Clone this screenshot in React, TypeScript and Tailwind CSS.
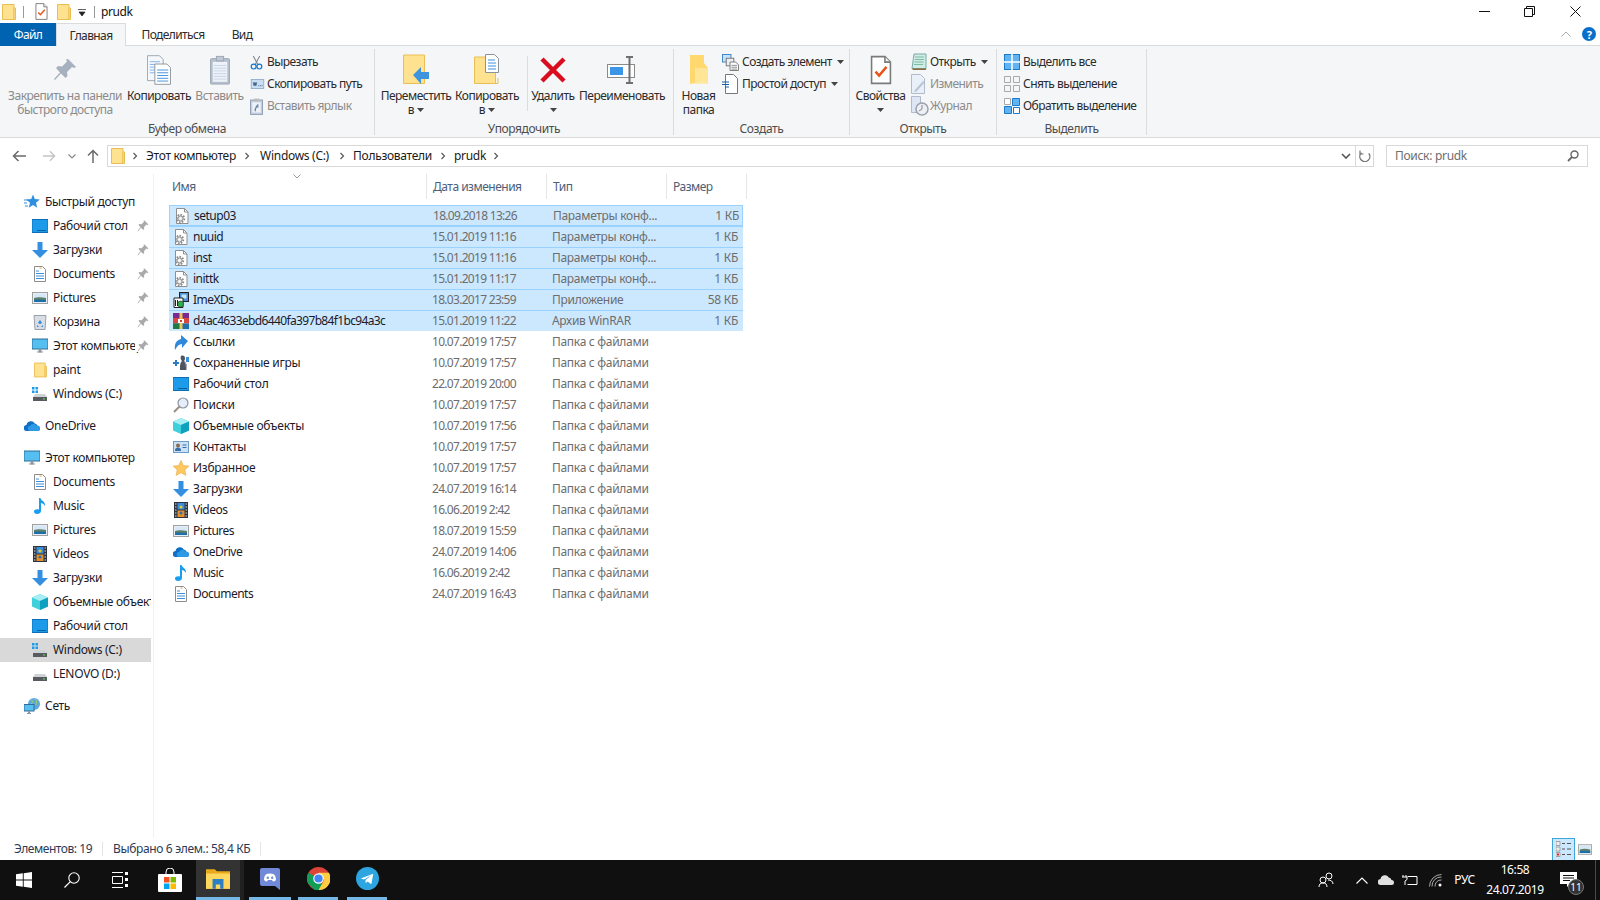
import React from 'react';

type P = { className?: string };
const Svg = ({ s = 16, h, children, vb, className }: { s?: number; h?: number; vb?: string; children: React.ReactNode; className?: string }) => (
  <svg width={s} height={h ?? s} viewBox={vb ?? `0 0 ${s} ${h ?? s}`} className={`shrink-0 ${className ?? ''}`}>{children}</svg>
);

const Folder = ({ s = 16, h = 16 }: { s?: number; h?: number }) => (
  <Svg s={s} h={h} vb="0 0 14 16">
    <path d="M.5.5h11.500v15H.5z" fill="#FFE28F" stroke="#E9BE55" />
    <path d="M12 4v11.500h1.500V4z" fill="#FFE9A8" stroke="#E9BE55" />
  </Svg>
);
const CheckDoc = ({ s = 16, h = 16 }: { s?: number; h?: number }) => (
  <Svg s={s} h={h} vb="0 0 14 18">
    <path d="M1 .5h8.500l3.500 3.500v13.500H1z" fill="#fff" stroke="#7a7a7a" />
    <path d="M9.500.5V4H13" fill="#eee" stroke="#7a7a7a" />
    <path d="M3.500 10l2.300 2.500L10.500 7" fill="none" stroke="#E8541C" strokeWidth="1.600" />
  </Svg>
);
const Pin = ({ c = '#A7B0BE' }: { c?: string }) => (
  <Svg s={24} vb="0 0 24 24">
    <path d="M15 1l8 8-2 1-2-1-5 5 .5 4-2 2-4.500-4.500L2 22l-1-1 6-6.500L3 10l2-2 4 .5 5-5-1-2z" fill={c} />
  </Svg>
);
const SmallPin = () => (
  <Svg s={12} vb="0 0 24 24">
    <path d="M15 1l8 8-2 1-2-1-5 5 .5 4-2 2-4.500-4.500L2 23l-1-1 6-7.500L3 10l2-2 4 .5 5-5-1-2z" fill="#A9A9A9" />
  </Svg>
);
const CopyDocs = () => (
  <Svg s={24} h={30} vb="0 0 26 32">
    <path d="M.5.5h13l4 4v23H.5z" fill="#F4F7FB" stroke="#9aa3ad" />
    <path d="M3 7h11M3 10h11M3 13h11M3 16h11M3 19h11" stroke="#7fb2e6" />
    <path d="M8.500 9.500h13l4 4v18h-17z" fill="#fff" stroke="#8a939c" />
    <path d="M11 16h12M11 19h12M11 22h12M11 25h12M11 28h12" stroke="#3e8ddd" />
  </Svg>
);
const Clipboard = () => (
  <Svg s={20} h={30} vb="0 0 22 32">
    <rect x=".5" y="3.500" width="21" height="28" rx="1" fill="#B5BFCD" stroke="#9aa5b4" />
    <rect x="3" y="7" width="16" height="22" fill="#EEF2F8" />
    <path d="M4 11h14M4 14h14M4 17h14M4 20h14M4 23h14M4 26h14" stroke="#C6D3E6" />
    <rect x="7" y="1" width="8" height="5" fill="#C0C8D3" stroke="#9aa5b4" />
  </Svg>
);
const Scissors = () => (
  <Svg vb="0 0 16 18" s={13} h={17}>
    <path d="M4 1l6 11M12 1L6 12" stroke="#7E8792" strokeWidth="1.300" />
    <circle cx="4.500" cy="14" r="3" fill="none" stroke="#1877CC" strokeWidth="1.500" />
    <circle cx="11.500" cy="14" r="3" fill="none" stroke="#1877CC" strokeWidth="1.500" />
  </Svg>
);
const CopyPath = () => (
  <Svg s={15} h={10} vb="0 0 16 12">
    <rect x=".5" y=".5" width="15" height="11" fill="#C9DEF3" stroke="#8DA9C7" />
    <path d="M3 4l1 4 1-4 1 4 1-4M9 8h1M11 8h1M13 8h1" stroke="#1c3d66" fill="none" strokeWidth=".9" />
  </Svg>
);
const Shortcut = () => (
  <Svg s={13} h={17} vb="0 0 14 18">
    <rect x=".5" y="2" width="13" height="15.500" fill="#C3CFE0" stroke="#8e9db3" />
    <rect x="2.500" y="4.500" width="9" height="11" fill="#EEF2F8" />
    <rect x="4" y=".5" width="6" height="3" fill="#bbb" />
    <path d="M5 14v-3l2-2H5.500L9 6v5L8 9.800 6.500 11.500V14z" fill="#6C87A8" />
  </Svg>
);
const MoveTo = () => (
  <Svg s={26} h={32} vb="0 0 26 32">
    <path d="M.5 1h21v28.500H.5z" fill="#FFE28F" stroke="#E9BE55" />
    <path d="M10 21l8-8v5h8v7h-8v5z" fill="#3F94DE" />
  </Svg>
);
const CopyTo = () => (
  <Svg s={26} h={32} vb="0 0 26 32">
    <path d="M.5 3h21v26.500H.5z" fill="#FFE28F" stroke="#E9BE55" />
    <path d="M21 29.500H24V24" fill="none" stroke="#E9BE55" />
    <path d="M11.500.5h9l4 4v14h-13z" fill="#fff" stroke="#8a939c" />
    <path d="M14 6h7M14 9h8M14 12h8M14 15h8" stroke="#3e8ddd" />
  </Svg>
);
const BigX = () => (
  <Svg s={28} vb="0 0 28 28">
    <path d="M3 3l22 22M25 3L3 25" stroke="#D90D1E" strokeWidth="4.500" />
  </Svg>
);
const Rename = () => (
  <Svg s={30} h={32} vb="0 0 30 32">
    <rect x=".5" y="10.500" width="27" height="13" fill="#fff" stroke="#8b8b8b" />
    <rect x="3" y="13" width="13" height="8" fill="#3B96E8" />
    <path d="M19 3h3.500V29H19M26 3h-3.500M26 29h-3.500" fill="none" stroke="#6f6f6f" strokeWidth="2" />
  </Svg>
);
const NewFolder = () => (
  <Svg s={20} h={32} vb="0 0 20 32">
    <path d="M1 1h14v8l4 5v16l-5-3v1L1 30z" fill="#FFD970" />
    <path d="M6 14h13v16H6z" fill="#FFE7A0" opacity=".8" />
  </Svg>
);
const NewItem = () => (
  <Svg s={17} vb="0 0 18 18">
    <rect x=".5" y=".5" width="9" height="8" fill="#C6E1F8" stroke="#3A86C8" />
    <rect x="4.500" y="4.500" width="8" height="8" fill="#eee" stroke="#777" />
    <path d="M8.500 8.500h6l3 3v6h-9z" fill="#fff" stroke="#777" />
    <path d="M10 12h6M10 14h6M10 16h6" stroke="#888" />
  </Svg>
);
const EasyAccess = () => (
  <Svg s={16} h={20} vb="0 0 16 20">
    <path d="M3.500.5h8l4 4v15h-12z" fill="#fff" stroke="#777" />
    <path d="M0 8h7M0 10.500h7M3 13h4" stroke="#1C5FA8" strokeWidth="1.200" />
  </Svg>
);
const OpenIco = () => (
  <Svg s={16} h={18} vb="0 0 16 18">
    <path d="M3 1h12v14.500H1z" fill="#CFEDE3" stroke="#7aa" />
    <path d="M4 4h9M4 6.500h9M3.500 9h9M3 11.500h9" stroke="#7fb9a8" />
    <path d="M1 15.500h14V17H2z" fill="#8a6b3a" />
  </Svg>
);
const EditIco = () => (
  <Svg s={14} h={20} vb="0 0 14 20">
    <path d="M.5.5h9l4 4v15H.5z" fill="#EAF0F8" stroke="#B0BCCC" />
    <path d="M4 16l8-9 1.500 1.500L5.500 17.500 3 18z" fill="#B7C4D6" />
  </Svg>
);
const HistoryIco = () => (
  <Svg s={18} h={20} vb="0 0 18 20">
    <path d="M.5.5h9v16H.5z" fill="#DDE6F2" stroke="#B0BCCC" />
    <circle cx="11" cy="13" r="6" fill="#EDEFF2" stroke="#98A2AE" strokeWidth="1.500" />
    <path d="M11 9v4l-3 2" stroke="#7d8794" fill="none" />
  </Svg>
);
const SelectAll = () => (
  <Svg s={16} vb="0 0 16 16">
    <rect x=".5" y=".5" width="15" height="15" fill="#61B3F3" stroke="#1A7BCB" />
    <path d="M8 0v16M0 8h16" stroke="#fff" strokeWidth="1.500" />
  </Svg>
);
const SelectNone = () => (
  <Svg s={16} vb="0 0 16 16">
    <path d="M.5.5h6v6h-6zM9.500.5h6v6h-6zM.5 9.500h6v6h-6zM9.500 9.500h6v6h-6z" fill="none" stroke="#A9A9A9" />
  </Svg>
);
const Invert = () => (
  <Svg s={16} vb="0 0 16 16">
    <path d="M.5.500h6v6h-6z" fill="#fff" stroke="#A9A9A9" />
    <path d="M8.500.5h7v7h-7zM.5 8.500h7v7h-7z" fill="#61B3F3" stroke="#1A7BCB" />
    <path d="M9.500 9.500h6v6h-6z" fill="#fff" stroke="#1A7BCB" />
  </Svg>
);
const Tri = () => (
  <svg width="7" height="4" viewBox="0 0 7 4" className="shrink-0"><path d="M0 0h7L3.500 4z" fill="#444" /></svg>
);

const FileGear = () => (
  <Svg s={16} vb="0 0 16 16">
    <path d="M2.500.5h8l3.500 3.500v11.500H2.500z" fill="#fff" stroke="#8f8f8f" />
    <path d="M10.500.5V4H14" fill="none" stroke="#8f8f8f" />
    <circle cx="6.500" cy="10.500" r="3.800" fill="none" stroke="#8a8a8a" strokeWidth="1.800" strokeDasharray="1.600 1.300" />
    <circle cx="6.500" cy="10.500" r="2.600" fill="#e6e6e6" stroke="#7d7d7d" strokeWidth=".9" />
    <circle cx="6.500" cy="10.500" r="1" fill="#fff" />
  </Svg>
);
const AppIco = () => (
  <Svg s={16} vb="0 0 16 16">
    <rect x="6.500" y=".5" width="9" height="9" fill="#4B8FDB" stroke="#222" />
    <rect x="8.500" y="2.500" width="5" height="4" fill="#C4E4F8" />
    <path d="M1 6h9v9.500H1z" fill="#fff" stroke="#222" />
    <circle cx="7.500" cy="12" r="3" fill="#2DB24B" stroke="#222" strokeWidth=".6" />
    <path d="M2.500 8v6M4.500 8v6" stroke="#222" />
  </Svg>
);
const Rar = () => (
  <Svg s={16} vb="0 0 16 16">
    <rect width="16" height="5" y="0" fill="#7B2B8E" />
    <rect width="16" height="5.500" y="5" fill="#D9463E" />
    <rect width="16" height="5.500" y="10.500" fill="#1F6FA8" />
    <rect width="8" height="5.500" y="10.500" fill="#1F7A3F" />
    <rect x="6.500" width="3" height="16" fill="#E9C65B" />
    <rect x="5" y="6" width="6" height="4" fill="#fff" />
    <rect x="7" y="7" width="2" height="2" fill="#C24A2A" />
  </Svg>
);
const Links = () => (
  <Svg s={16} vb="0 0 16 16">
    <path d="M2 16C1 9 4 6 8 5V1l7 6-6 7v-4c-3 0-5 2-7 6z" fill="#2E88DC" />
  </Svg>
);
const Games = () => (
  <Svg s={16} vb="0 0 16 16">
    <path d="M0 7h2V5h2v2h2v2H4v2H2V9H0z" fill="#2E79C4" />
    <path d="M8 1c2-1 4 0 4 2 0 1 0 2-1 3 2 1 3 3 3 9H7c0-5 0-7 2-9-1-1-2-3-1-5z" fill="#4F5560" />
    <path d="M10 6c2 1 3 3 3 9h1c0-6-1-8-4-9z" fill="#B4BBC5" />
    <path d="M13 2h3v5h-3z" fill="#3A8FDB" />
  </Svg>
);
const Desktop = () => (
  <Svg s={16} h={16} vb="0 0 16 16">
    <rect y="1.500" width="16" height="13" fill="#1B9BEA" stroke="#0D6EB5" />
    <path d="M5 12.500h9" stroke="#0E5F99" />
  </Svg>
);
const Mag = () => (
  <Svg s={16} vb="0 0 16 16">
    <circle cx="10" cy="6" r="5" fill="#E5EEF8" stroke="#8a96a3" strokeWidth="1.200" />
    <path d="M6.500 9.500L1 15" stroke="#9a8f84" strokeWidth="2" />
  </Svg>
);
const Obj3d = () => (
  <Svg s={16} vb="0 0 16 16">
    <path d="M8 0l8 3.500v9L8 16l-8-3.500v-9z" fill="#3FD0DC" />
    <path d="M8 0l8 3.500L8 7 0 3.500z" fill="#A6EEF2" />
    <path d="M8 7l8-3.500v9L8 16z" fill="#0F9FBF" />
  </Svg>
);
const Contacts = () => (
  <Svg s={16} h={14} vb="0 0 16 14">
    <rect x=".5" y="1.500" width="15" height="11" fill="#C9E2F8" stroke="#6C9BC8" />
    <circle cx="5" cy="5.500" r="2" fill="#8D6A4F" />
    <path d="M2 11c0-3 1-3.500 3-3.500S8 8 8 11z" fill="#3B6EA5" />
    <path d="M9.500 5h4M9.500 7.500h4" stroke="#3B6EA5" />
  </Svg>
);
const Star = () => (
  <Svg s={16} vb="0 0 16 16">
    <path d="M8 .5l2.300 5 5.500.6-4 3.800 1.100 5.500L8 12.700l-4.900 2.700 1.100-5.500-4-3.800 5.500-.6z" fill="#FCC85F" stroke="#E8A94C" strokeWidth=".6" />
  </Svg>
);
const Down = () => (
  <Svg s={16} vb="0 0 16 16">
    <path d="M5.500 0h5v8H16l-8 8-8-8h5.500z" fill="#358FE0" />
  </Svg>
);
const Videos = () => (
  <Svg s={14} h={16} vb="0 0 14 16">
    <rect width="14" height="16" fill="#2D3440" />
    <path d="M1 2h1.500M1 5h1.500M1 8h1.500M1 11h1.500M1 14h1.500M11.500 2H13M11.500 5H13M11.500 8H13M11.500 11H13M11.500 14H13" stroke="#ddd" />
    <rect x="3.500" y="1" width="7" height="6.500" fill="#3A8DDB" />
    <rect x="3.500" y="8.500" width="7" height="6.500" fill="#E58F2B" />
    <circle cx="7" cy="5" r="1.500" fill="#E9C930" />
    <circle cx="7" cy="11" r="1.500" fill="#2C6FB5" />
  </Svg>
);
const Pictures = ({ w = 16, h = 12 }: { w?: number; h?: number }) => (
  <Svg s={w} h={h} vb="0 0 16 12">
    <rect x=".5" y=".5" width="15" height="11" fill="#E6EFF8" stroke="#A0A0A0" />
    <rect x="2" y="2" width="12" height="4" fill="#D6E8F5" />
    <path d="M2 6c3-1 8-1 12 0v4H2z" fill="#5E7E68" />
    <path d="M2 8c4-1 8 0 12 0v2H2z" fill="#1C6FA8" />
  </Svg>
);
const OneDrive = ({ s = 16 }: { s?: number }) => (
  <Svg s={s} h={s * 0.625} vb="0 0 16 10">
    <path d="M3 10a3 3 0 01-.5-6 4.500 4.500 0 018.300-1.500A3.500 3.500 0 0113.500 5 2.500 2.500 0 0113.500 10z" fill="#0F6FC6" />
    <path d="M6 10a2.500 2.500 0 01.2-5 3.500 3.500 0 016.300-.3 2.700 2.700 0 011.500 5.300z" fill="#2C9AE5" />
  </Svg>
);
const Music = () => (
  <Svg s={12} h={16} vb="0 0 12 16">
    <path d="M5 0h1.500c.5 3 5 3 4.500 8-1-2-3-3-4-3v8c0 2-2 3-4 3s-3-1-3-2.500S2 11 5 11.500z" fill="#1A9CF0" />
  </Svg>
);
const Docs = () => (
  <Svg s={12} h={16} vb="0 0 12 16">
    <path d="M.5.5h8l3 3v12H.5z" fill="#fff" stroke="#8d8d8d" />
    <path d="M2 5h3M2 7.500h8M2 10h8M2 12.500h8" stroke="#3A8DDB" />
    <path d="M5.500 2h2" stroke="#E0A030" />
  </Svg>
);
const Bin = () => (
  <Svg s={14} h={16} vb="0 0 14 16">
    <path d="M1 1.500h12L12 15.500H2z" fill="#D9DEE5" stroke="#99A1AC" />
    <path d="M5 9l2-3 2 3-2 1zM4 11l2 2H4zM10 11l-2 2h2z" fill="#2E88DC" />
  </Svg>
);
const Computer = ({ s = 16 }: { s?: number }) => (
  <Svg s={s} vb="0 0 16 16">
    <rect y="1" width="16" height="10" fill="#55BFF2" stroke="#2F6E99" />
    <path d="M5 14h6M7 11h2v3H7z" fill="#8d98a3" stroke="#8d98a3" />
  </Svg>
);
const Drive = ({ win = true }: { win?: boolean }) => (
  <Svg s={16} vb="0 0 16 16">
    {win && <path d="M0 1h2.500v2.500H0zM3.500 1H6v2.500H3.500zM0 4.500h2.500V7H0zM3.500 4.500H6V7H3.500z" fill="#1B9BEA" />}
    <path d="M3 8h10l2 3H1z" fill="#D0D3D6" />
    <rect x="1" y="11" width="14" height="4" fill="#585C60" />
    <rect x="11" y="12.500" width="2" height="1" fill="#4CE14C" />
  </Svg>
);
const Network = () => (
  <Svg s={16} vb="0 0 16 16">
    <circle cx="10" cy="6" r="6" fill="#5FA8DC" />
    <path d="M7 2c2 0 2 3 0 4M11 1c2 2 2 4 1 6" stroke="#9BD06A" fill="none" />
    <rect y="6.500" width="10" height="6.500" fill="#55BFF2" stroke="#2F6E99" />
    <path d="M3 15.500h4M4.500 13h1v2h-1z" stroke="#8d98a3" />
  </Svg>
);
const QuickStar = () => (
  <Svg s={16} vb="0 0 16 16">
    <path d="M9 .5l1.800 4.500 5 .4-3.800 3.300 1.200 5L9 11l-4.200 2.700 1.200-5L2.200 5.400l5-.4z" fill="#2E8FE0" />
    <path d="M0 6h4M0 9h3M1 12h3" stroke="#2E8FE0" />
  </Svg>
);
const Chev = ({ className = '' }: P) => (
  <svg width="6" height="8" viewBox="0 0 6 8" className={`shrink-0 ${className}`}><path d="M1.500 1l3 3-3 3" fill="none" stroke="#5a5a5a" strokeWidth="1.200" /></svg>
);

const T = 'font-["Noto_Sans",sans-serif]';

const Large = ({ w, icon, l1, l2, tri, dim }: { w: number; icon: React.ReactNode; l1: string; l2?: string; tri?: boolean; dim?: boolean }) => (
  <div style={{ width: w }} className={`flex flex-col items-center shrink-0 text-[12px] leading-[14px] tracking-[-0.5px] whitespace-nowrap ${dim ? 'text-[#8b8b8b]' : 'text-[#2b2b2b]'}`}>
    <div className="h-[32px] mt-[5px] mb-[3px] flex items-center justify-center">{icon}</div>
    <div>{l1}</div>
    {l2 && (
      <div className="flex items-center gap-[3px]">{l2}{tri && <Tri />}</div>
    )}
    {!l2 && tri && <div className="h-[14px] flex items-center"><Tri /></div>}
  </div>
);

const Small = ({ icon, text, w = 20, tri, dim }: { icon: React.ReactNode; text: string; w?: number; tri?: boolean; dim?: boolean }) => (
  <div className={`h-[22px] flex items-center text-[12px] tracking-[-0.55px] whitespace-nowrap ${dim ? 'text-[#8b8b8b]' : 'text-[#2b2b2b]'}`}>
    <div style={{ width: w }} className="flex items-center shrink-0">{icon}</div>
    <span>{text}</span>
    {tri && <span className="ml-[5px]"><Tri /></span>}
  </div>
);

const Group = ({ w, label, children, className = '' }: { w: number; label: string; children: React.ReactNode; className?: string }) => (
  <div style={{ width: w }} className="h-[86px] mt-[3px] shrink-0 border-r border-[#dcdcdc] flex flex-col">
    <div className={`h-[72px] shrink-0 flex items-start ${className}`}>{children}</div>
    <div className="shrink-0 text-center text-[12px] leading-[16px] tracking-[-0.4px] text-[#4d4d4d]">{label}</div>
  </div>
);

const Col = ({ children, className = '' }: { children: React.ReactNode; className?: string }) => (
  <div className={`flex flex-col pt-[2px] ${className}`}>{children}</div>
);

const NavItem = ({ icon, text, pin, top, sel, gap }: { icon: React.ReactNode; text: string; pin?: boolean; top?: boolean; sel?: boolean; gap?: boolean }) => (
  <div className={`h-[24px] w-[151px] flex items-center shrink-0 relative overflow-hidden ${gap ? 'mt-[8px]' : ''} ${sel ? 'bg-[#d9d9d9]' : ''} ${top ? 'pl-[24px]' : 'pl-[32px]'}`}>
    <div className="w-[16px] flex justify-center shrink-0">{icon}</div>
    <span className="text-[12px] tracking-[-0.3px] whitespace-nowrap text-[#1a1a2a] ml-[5px]">{text}</span>
    {pin && <span className="absolute right-[2px] top-[6px] bg-white pl-[2px]"><SmallPin /></span>}
  </div>
);

const files: [React.ReactNode, string, string, string, string, boolean][] = [
  [<FileGear />, 'setup03', '18.09.2018 13:26', 'Параметры конф...', '1 КБ', true],
  [<FileGear />, 'nuuid', '15.01.2019 11:16', 'Параметры конф...', '1 КБ', true],
  [<FileGear />, 'inst', '15.01.2019 11:16', 'Параметры конф...', '1 КБ', true],
  [<FileGear />, 'inittk', '15.01.2019 11:17', 'Параметры конф...', '1 КБ', true],
  [<AppIco />, 'ImeXDs', '18.03.2017 23:59', 'Приложение', '58 КБ', true],
  [<Rar />, 'd4ac4633ebd6440fa397b84f1bc94a3c', '15.01.2019 11:22', 'Архив WinRAR', '1 КБ', true],
  [<Links />, 'Ссылки', '10.07.2019 17:57', 'Папка с файлами', '', false],
  [<Games />, 'Сохраненные игры', '10.07.2019 17:57', 'Папка с файлами', '', false],
  [<Desktop />, 'Рабочий стол', '22.07.2019 20:00', 'Папка с файлами', '', false],
  [<Mag />, 'Поиски', '10.07.2019 17:57', 'Папка с файлами', '', false],
  [<Obj3d />, 'Объемные объекты', '10.07.2019 17:56', 'Папка с файлами', '', false],
  [<Contacts />, 'Контакты', '10.07.2019 17:57', 'Папка с файлами', '', false],
  [<Star />, 'Избранное', '10.07.2019 17:57', 'Папка с файлами', '', false],
  [<Down />, 'Загрузки', '24.07.2019 16:14', 'Папка с файлами', '', false],
  [<Videos />, 'Videos', '16.06.2019 2:42', 'Папка с файлами', '', false],
  [<Pictures />, 'Pictures', '18.07.2019 15:59', 'Папка с файлами', '', false],
  [<OneDrive />, 'OneDrive', '24.07.2019 14:06', 'Папка с файлами', '', false],
  [<Music />, 'Music', '16.06.2019 2:42', 'Папка с файлами', '', false],
  [<Docs />, 'Documents', '24.07.2019 16:43', 'Папка с файлами', '', false],
];

const nameTracking = (n: string) => {
  if (n.startsWith('d4ac')) return 'tracking-[-0.65px]';
  if (/^[A-Za-z0-9]+$/.test(n)) return 'tracking-[-0.5px]';
  return 'tracking-[-0.25px]';
};

const Crumb = ({ t, w }: { t: string; w: number }) => (
  <>
    <span style={{ width: w }} className="shrink-0 text-center whitespace-nowrap tracking-[-0.3px]">{t}</span>
    <Chev className="mx-[8px]" />
  </>
);

const Header = ({ w, t }: { w: number; t: string }) => (
  <div style={{ width: w }} className="h-[25px] shrink-0 border-r border-[#e5e5e5] pl-[6px] flex items-center text-[12px] tracking-[-0.5px] text-[#4c607a]">{t}</div>
);

export default function App() {
  return (
    <div className={`w-[1600px] h-[900px] overflow-hidden flex flex-col bg-white ${T}`}>
      {/* Title bar */}
      <div className="h-[23px] shrink-0 flex items-center text-[12px] text-[#111]">
        <div className="ml-[2px]"><Folder s={14} h={16} /></div>
        <div className="ml-[7px] w-px h-[12px] bg-[#999]" />
        <div className="ml-[11px]"><CheckDoc s={13} h={17} /></div>
        <div className="ml-[9px]"><Folder s={14} h={16} /></div>
        <svg width="8" height="8" viewBox="0 0 8 8" className="ml-[7px] mt-[3px]"><path d="M0 .5h8M1 3h6L4 7z" stroke="#222" fill="#222" strokeWidth=".7" /></svg>
        <div className="ml-[8px] w-px h-[12px] bg-[#999]" />
        <span className="ml-[6px] tracking-[-0.4px]">prudk</span>
        <div className="ml-auto flex items-center">
          <svg width="11" height="11" viewBox="0 0 11 11" className="mr-[34px]"><path d="M0 5.500h11" stroke="#111" /></svg>
          <svg width="11" height="11" viewBox="0 0 11 11" className="mr-[35px]"><path d="M.5 2.500h8v8h-8zM2.500 2.500v-2h8v8h-2" fill="none" stroke="#111" /></svg>
          <svg width="11" height="11" viewBox="0 0 11 11" className="mr-[19px]"><path d="M.5.5l10 10M10.500.5l-10 10" stroke="#111" /></svg>
        </div>
      </div>
      {/* Tabs */}
      <div className="h-[23px] shrink-0 flex items-stretch text-[12px] tracking-[-0.6px] border-b border-[#dadbdc]">
        <div className="w-[56px] bg-[#0063b1] text-white flex items-center justify-center h-[23px] pt-px">Файл</div>
        <div className="w-[70px] bg-[#f5f6f7] border-x border-t border-[#dadbdc] flex items-center justify-center text-[#2b2b2b] h-[23px] pt-px">Главная</div>
        <div className="ml-[16px] w-[62px] flex items-center justify-center text-[#2b2b2b] pt-[2px]">Поделиться</div>
        <div className="ml-[28px] w-[20px] flex items-center justify-center text-[#2b2b2b] pt-[2px]">Вид</div>
        <div className="ml-auto flex items-center">
          <svg width="10" height="6" viewBox="0 0 10 6" className="mr-[11px]"><path d="M.5 5.500L5 1l4.500 4.500" fill="none" stroke="#aaa" /></svg>
          <div className="w-[14px] h-[14px] mr-[4px] rounded-full bg-[#0a6fc9] text-white text-[11px] font-bold leading-none flex items-center justify-center">?</div>
        </div>
      </div>
      {/* Ribbon */}
      <div className="h-[92px] shrink-0 bg-[#f5f6f7] border-b border-[#dadbdc] flex items-start">
        <Group w={375} label="Буфер обмена" className="pl-[8px]">
          <Large w={114} dim icon={<Pin />} l1="Закрепить на панели" l2="быстрого доступа" />
          <div className="ml-[5px]"><Large w={64} icon={<CopyDocs />} l1="Копировать" /></div>
          <div className="ml-[6px]"><Large w={45} dim icon={<Clipboard />} l1="Вставить" /></div>
          <Col className="ml-[8px]">
            <Small w={17} icon={<Scissors />} text="Вырезать" />
            <Small w={17} icon={<CopyPath />} text="Скопировать путь" />
            <Small w={17} dim icon={<Shortcut />} text="Вставить ярлык" />
          </Col>
        </Group>
        <Group w={299} label="Упорядочить" className="pl-[6px]">
          <Large w={70} icon={<MoveTo />} l1="Переместить" l2="в" tri />
          <div className="ml-[4px]"><Large w={64} icon={<CopyTo />} l1="Копировать" l2="в" tri /></div>
          <div className="ml-[8px] mt-[7px] w-px h-[55px] bg-[#dcdcdc]" />
          <div className="ml-[3px]"><Large w={44} icon={<BigX />} l1="Удалить" tri /></div>
          <div className="ml-[5px]"><Large w={84} icon={<Rename />} l1="Переименовать" /></div>
        </Group>
        <Group w={176} label="Создать" className="pl-[8px]">
          <Large w={33} icon={<NewFolder />} l1="Новая" l2="папка" />
          <Col className="ml-[7px]">
            <Small icon={<NewItem />} text="Создать элемент" tri />
            <Small icon={<EasyAccess />} text="Простой доступ" tri />
          </Col>
        </Group>
        <Group w={147} label="Открыть" className="pl-[6px]">
          <Large w={49} icon={<CheckDoc s={22} h={32} />} l1="Свойства" tri />
          <Col className="ml-[6px]">
            <Small w={19} icon={<OpenIco />} text="Открыть" tri />
            <Small w={19} dim icon={<EditIco />} text="Изменить" />
            <Small w={19} dim icon={<HistoryIco />} text="Журнал" />
          </Col>
        </Group>
        <Group w={150} label="Выделить" className="pl-[7px]">
          <Col>
            <Small w={19} icon={<SelectAll />} text="Выделить все" />
            <Small w={19} icon={<SelectNone />} text="Снять выделение" />
            <Small w={19} icon={<Invert />} text="Обратить выделение" />
          </Col>
        </Group>
      </div>
      {/* Address row */}
      <div className="h-[36px] shrink-0 flex items-center">
        <svg width="14" height="12" viewBox="0 0 14 12" className="ml-[12px]"><path d="M14 6H2M6.500 1L1.500 6l5 5" fill="none" stroke="#6a6a6a" strokeWidth="1.500" /></svg>
        <svg width="13" height="12" viewBox="0 0 14 12" className="ml-[17px]"><path d="M0 6h12M7.500 1l5 5-5 5" fill="none" stroke="#c4c4c4" strokeWidth="1.500" /></svg>
        <svg width="8" height="5" viewBox="0 0 8 5" className="ml-[12px]"><path d="M.5.5L4 4 7.500.5" fill="none" stroke="#888" strokeWidth="1.200" /></svg>
        <svg width="12" height="14" viewBox="0 0 12 14" className="ml-[11px]"><path d="M6 14V2M1 6.500l5-5 5 5" fill="none" stroke="#6a6a6a" strokeWidth="1.500" /></svg>
        <div className="ml-[8px] w-[1267px] h-[22px] border border-[#d9d9d9] flex items-center text-[12px] text-[#1a1a1a]">
          <div className="ml-[3px]"><Folder s={14} h={16} /></div>
          <Chev className="ml-[7px] mr-[8px]" />
          <Crumb t="Этот компьютер" w={90} />
          <Crumb t="Windows (C:)" w={73} />
          <Crumb t="Пользователи" w={79} />
          <Crumb t="prudk" w={31} />
          <svg width="10" height="6" viewBox="0 0 10 6" className="ml-auto mr-[4px]"><path d="M1 1l4 4 4-4" fill="none" stroke="#555" strokeWidth="1.600" /></svg>
          <div className="w-[18px] h-full border-l border-[#d9d9d9] flex items-center justify-center">
            <svg width="12" height="12" viewBox="0 0 12 12"><path d="M9.800 3.500A5 5 0 112.500 2.800" fill="none" stroke="#777" strokeWidth="1.400" /><path d="M1 .5v3.500h3.500" fill="none" stroke="#777" strokeWidth="1.200" /></svg>
          </div>
        </div>
        <div className="ml-[12px] w-[202px] h-[22px] border border-[#d9d9d9] flex items-center text-[12px] text-[#6d6d6d] pl-[8px]">
          <span className="tracking-[-0.3px]">Поиск: prudk</span>
          <svg width="12" height="12" viewBox="0 0 12 12" className="ml-auto mr-[8px]"><circle cx="7.500" cy="4.500" r="3.500" fill="none" stroke="#666" strokeWidth="1.400" /><path d="M5 7l-4 4" stroke="#666" strokeWidth="1.800" /></svg>
        </div>
      </div>
      {/* Main */}
      <div className="flex-1 min-h-0 flex">
        <div className="w-[154px] shrink-0 border-r border-[#f0f0f0] pt-[16px] flex flex-col">
          <NavItem top icon={<QuickStar />} text="Быстрый доступ" />
          <NavItem pin icon={<Desktop />} text="Рабочий стол" />
          <NavItem pin icon={<Down />} text="Загрузки" />
          <NavItem pin icon={<Docs />} text="Documents" />
          <NavItem pin icon={<Pictures />} text="Pictures" />
          <NavItem pin icon={<Bin />} text="Корзина" />
          <NavItem pin icon={<Computer />} text="Этот компьютер" />
          <NavItem icon={<Folder s={13} h={16} />} text="paint" />
          <NavItem icon={<Drive />} text="Windows (C:)" />
          <NavItem gap top icon={<OneDrive />} text="OneDrive" />
          <NavItem gap top icon={<Computer />} text="Этот компьютер" />
          <NavItem icon={<Docs />} text="Documents" />
          <NavItem icon={<Music />} text="Music" />
          <NavItem icon={<Pictures />} text="Pictures" />
          <NavItem icon={<Videos />} text="Videos" />
          <NavItem icon={<Down />} text="Загрузки" />
          <NavItem icon={<Obj3d />} text="Объемные объекты" />
          <NavItem icon={<Desktop />} text="Рабочий стол" />
          <NavItem sel icon={<Drive />} text="Windows (C:)" />
          <NavItem icon={<Drive win={false} />} text="LENOVO (D:)" />
          <NavItem gap top icon={<Network />} text="Сеть" />
        </div>
        <div className="flex-1 min-w-0 flex flex-col relative">
          <svg width="8" height="5" viewBox="0 0 8 5" className="absolute left-[139px] top-0"><path d="M.5.5L4 4 7.500.5" fill="none" stroke="#9a9a9a" /></svg>
          <div className="flex pl-[12px]">
            <Header w={261} t="Имя" />
            <Header w={120} t="Дата изменения" />
            <Header w={120} t="Тип" />
            <Header w={80} t="Размер" />
          </div>
          <div className="pt-[6px] pl-[15px] flex flex-col">
            {files.map(([ic, n, d, ty, sz, sel], i) => (
              <div key={i} className={`h-[21px] w-[574px] shrink-0 flex items-center text-[12px] tracking-[-0.3px] whitespace-nowrap ${sel ? `bg-[#cce8ff] ${i > 0 ? 'border-t border-[#99d1ff]' : 'border border-[#99d1ff]'}` : ''}`}>
                <div className="w-[24px] flex justify-center shrink-0">{ic}</div>
                <div className={`w-[239px] shrink-0 text-[#1a1a2a] ${nameTracking(n)}`}>{n}</div>
                <div className="w-[120px] shrink-0 text-[#6d6d6d] tracking-[-0.7px]">{d}</div>
                <div className="w-[120px] shrink-0 text-[#6d6d6d] tracking-[-0.3px]">{ty}</div>
                <div className="w-[66px] shrink-0 text-right text-[#6d6d6d]">{sz}</div>
              </div>
            ))}
          </div>
        </div>
      </div>
      {/* Status */}
      <div className="h-[22px] shrink-0 flex items-center text-[12px] text-[#2c3a55]">
        <span className="ml-[14px] w-[88px] tracking-[-0.45px]">Элементов: 19</span>
        <div className="w-px h-[14px] bg-[#e5e5e5]" />
        <span className="ml-[10px] w-[147px] whitespace-nowrap tracking-[-0.35px]">Выбрано 6 элем.: 58,4 КБ</span>
        <div className="w-px h-[14px] bg-[#e5e5e5]" />
        <div className="ml-auto w-[23px] h-[23px] bg-[#cce8ff] border border-[#3fa5dc] flex items-center justify-center">
          <svg width="16" height="16" viewBox="0 0 16 16"><path d="M0 .5h4v4H0zM0 6h4v4H0zM0 11.500h4v4H0z" fill="#eee" stroke="#888" strokeWidth=".7" /><path d="M6 2.500h3M11 2.500h4M6 8h3M11 8h4M6 13.500h3M11 13.500h4" stroke="#555" /><rect x="1" y="12.500" width="2" height="2" fill="#e02020" /></svg>
        </div>
        <div className="ml-[3px] mr-[8px]"><Pictures w={14} h={11} /></div>
      </div>
      {/* Taskbar */}
      <div className="h-[40px] shrink-0 bg-[#101010] flex items-stretch text-white">
        <div className="w-[48px] flex items-center justify-center">
          <svg width="16" height="16" viewBox="0 0 16 16"><path d="M0 2.300l6.800-1v6.300H0zM7.700 1.200L16 0v7.600H7.700zM0 8.500h6.800v6.300l-6.800-1zM7.700 8.500H16V16l-8.300-1.200z" fill="#fff" /></svg>
        </div>
        <div className="w-[48px] flex items-center justify-center">
          <svg width="16" height="16" viewBox="0 0 16 16"><circle cx="10" cy="6" r="5.200" fill="none" stroke="#fff" strokeWidth="1.100" /><path d="M6.300 9.700L.5 15.500" stroke="#fff" strokeWidth="1.200" /></svg>
        </div>
        <div className="w-[48px] flex items-center justify-center">
          <svg width="16" height="16" viewBox="0 0 16 16"><path d="M0 .5h11M0 15.500h11M.5 4.500h10v7H.5z" fill="none" stroke="#fff" /><path d="M13 0h3v3h-3zM13 6h3v3h-3zM13 12h3v3h-3z" fill="#fff" /></svg>
        </div>
        <div className="w-[52px] flex items-center justify-center">
          <svg width="24" height="24" viewBox="0 0 24 24"><path d="M8 6V4a4 4 0 018 0v2" fill="none" stroke="#fff" /><rect y="6" width="24" height="18" rx="1" fill="#fff" /><rect x="6" y="9" width="5.500" height="5.500" fill="#F25022" /><rect x="12.500" y="9" width="5.500" height="5.500" fill="#7FBA00" /><rect x="6" y="15.500" width="5.500" height="5.500" fill="#00A4EF" /><rect x="12.500" y="15.500" width="5.500" height="5.500" fill="#FFB900" /></svg>
        </div>
        <div className="w-[44px] bg-[#333] border-b-[3px] border-[#75b7e5] flex items-center justify-center">
          <svg width="24" height="20" viewBox="0 0 22 18"><path d="M0 0h8l2 2h12v16H0z" fill="#E8A91C" /><rect y="4" width="22" height="14" fill="#FFD75E" /><path d="M6 9h10v9h-3v-4H9v4H6z" fill="#2D7FC4" /></svg>
        </div>
        <div className="w-[4px] bg-[#202020]" />
        <div className="ml-[5px] w-[42px] border-b-[3px] border-[#75b7e5] flex items-center justify-center">
          <svg width="20" height="22" viewBox="0 0 20 22"><path d="M2 0h16a2 2 0 012 2v20l-5-4H2a2 2 0 01-2-2V2a2 2 0 012-2z" fill="#7289DA" /><path d="M4 12c0-3 1-5 2.500-6 2-.8 5-.8 7 0C15 7 16 9 16 12c-1 1-2.500 1.500-3 1.500l-1-1.500H8l-1 1.500C6.500 13.500 5 13 4 12z" fill="#fff" /><circle cx="7.800" cy="9.800" r="1.200" fill="#7289DA" /><circle cx="12.200" cy="9.800" r="1.200" fill="#7289DA" /></svg>
        </div>
        <div className="ml-[7px] w-[40px] border-b-[3px] border-[#75b7e5] flex items-center justify-center">
          <svg width="23" height="23" viewBox="0 0 24 24"><circle cx="12" cy="12" r="12" fill="#DB4437" /><path d="M12 12L1.600 6A12 12 0 001 17l7 7A12 12 0 0018 22.500z" fill="#0F9D58" /><path d="M12 6h10.900A12 12 0 0112 24l6-10.500z" fill="#FFCD40" /><circle cx="12" cy="12" r="5.500" fill="#fff" /><circle cx="12" cy="12" r="4.300" fill="#4285F4" /></svg>
        </div>
        <div className="ml-[9px] w-[40px] border-b-[3px] border-[#75b7e5] flex items-center justify-center">
          <svg width="23" height="23" viewBox="0 0 24 24"><circle cx="12" cy="12" r="12" fill="#2CA5E0" /><path d="M5 12l13-5-2 11-4-3-2 2v-3.500l6-5-7.500 4.500z" fill="#fff" /></svg>
        </div>
        <div className="ml-auto flex items-center">
          <svg width="16" height="16" viewBox="0 0 16 16" className="mr-[22px]"><circle cx="11" cy="4" r="3" fill="none" stroke="#fff" /><circle cx="5" cy="8" r="3" fill="none" stroke="#fff" /><path d="M1 15c0-3 1.500-4 4-4s4 1 4 4M10 8c2.500 0 5 1 5 4" fill="none" stroke="#fff" /></svg>
          <svg width="12" height="7" viewBox="0 0 12 7" className="mr-[10px]"><path d="M.5 6.500L6 1l5.500 5.500" fill="none" stroke="#fff" strokeWidth="1.100" /></svg>
          <svg width="16" height="10" viewBox="0 0 16 10" className="mr-[8px]"><path d="M3 10a3 3 0 01-.5-6 4.500 4.500 0 018.300-1.500A3.500 3.500 0 0113.500 5 2.500 2.500 0 0113.500 10z" fill="#e0e0e0" /></svg>
          <svg width="16" height="12" viewBox="0 0 16 12" className="mr-[11px]"><path d="M5.500 2.500h9.500v8H5.500" fill="none" stroke="#fff" /><path d="M1 1v2M4 1v2M0 3h5v2.500L3 7v4" fill="none" stroke="#fff" /></svg>
          <svg width="13" height="13" viewBox="0 0 13 13" className="mr-[12px]"><path d="M.5 12.500a12 12 0 0112-12M3 12.500a9 9 0 019.500-9.500M6 12.500a6 6 0 016.500-6.500" fill="none" stroke="#aaa" /><circle cx="11" cy="11" r="1.500" fill="#fff" /></svg>
          <span className="text-[12px] tracking-[-0.3px] mr-[12px]">РУС</span>
          <div className="w-[56px] text-center text-[12px] leading-[20px] tracking-[-0.4px] whitespace-nowrap flex flex-col items-center mr-[17px]"><span>16:58</span><span>24.07.2019</span></div>
          <div className="relative w-[17px] h-[16px] mr-[18px]">
            <svg width="17" height="16" viewBox="0 0 17 16"><path d="M0 0h17v12h-7l-3 3v-3H0z" fill="#fff" /><path d="M3 3.500h11M3 6h11M3 8.500h7" stroke="#101010" /></svg>
            <div className="absolute left-[8px] top-[7px] w-[16px] h-[16px] rounded-full bg-[#333] border border-[#777] text-[10px] leading-none flex items-center justify-center">11</div>
          </div>
          <div className="w-px h-full bg-[#4a4a4a]" />
          <div className="w-[4px]" />
        </div>
      </div>
    </div>
  );
}
